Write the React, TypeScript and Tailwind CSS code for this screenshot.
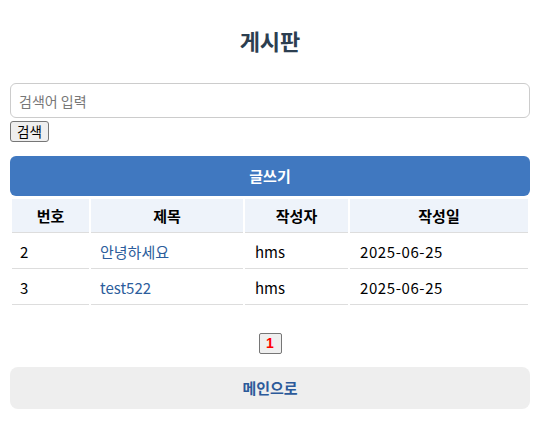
import React from "react";

const rows = [
  { id: 2, title: "안녕하세요", author: "hms", date: "2025-06-25" },
  { id: 3, title: "test522", author: "hms", date: "2025-06-25" },
];

export default function App() {
  const font = { fontFamily: '"Noto Sans CJK KR", "Noto Sans", sans-serif' };
  return (
    <div className="min-h-[436px] bg-white" style={font}>
      <div className="w-[520px] ml-[10px] pt-[25px]">
        <h2 className="text-center text-[22px] leading-[30px] font-bold text-[#2c3e50]">게시판</h2>
        <input
          placeholder="검색어 입력"
          className="mt-[28px] block w-full h-[35px] rounded-[6px] border border-[#cccccc] px-[8px] text-[14px] text-[#222] placeholder:text-[#777] outline-none"
        />
        <button className="mt-[3px] block h-[21px] px-[6px] border border-[#767676] rounded-[3px] bg-[#efefef] text-[13.5px] leading-[17px] text-black">
          검색
        </button>
        <button className="mt-[14px] block w-full h-[40px] rounded-[6px] bg-[#4078c0] text-white text-[15px] font-bold">
          글쓰기
        </button>
        <table className="mt-[1px] w-full border-separate border-spacing-[2px] text-[15px] text-black">
          <thead>
            <tr>
              <th className="w-[77px] bg-[#eef3fa] border-b border-[#dddddd] py-[8px] leading-[17px] font-bold">번호</th>
              <th className="w-[152px] bg-[#eef3fa] border-b border-[#dddddd] py-[8px] leading-[17px] font-bold">제목</th>
              <th className="w-[103px] bg-[#eef3fa] border-b border-[#dddddd] py-[8px] leading-[17px] font-bold">작성자</th>
              <th className="bg-[#eef3fa] border-b border-[#dddddd] py-[8px] leading-[17px] font-bold">작성일</th>
            </tr>
          </thead>
          <tbody>
            {rows.map((r) => (
              <tr key={r.id}>
                <td className="border-b border-[#dddddd] py-[8px] px-[8px] leading-[17px]">{r.id}</td>
                <td className="border-b border-[#dddddd] py-[8px] px-[9px] leading-[17px]">
                  <a className="text-[#2c5d9c] no-underline cursor-pointer">{r.title}</a>
                </td>
                <td className="border-b border-[#dddddd] py-[8px] px-[10px] leading-[17px]">{r.author}</td>
                <td className="border-b border-[#dddddd] py-[8px] px-[10px] leading-[17px] tracking-[0.6px]">{r.date}</td>
              </tr>
            ))}
          </tbody>
        </table>
        <div className="mt-[26px] flex justify-center">
          <button
            className="h-[21px] w-[23px] border border-[#767676] rounded-[2px] bg-[#efefef] text-[14px] leading-[19px] font-bold text-[#ff0000]"
            style={{ fontFamily: '"Liberation Sans", Arial, sans-serif' }}
          >
            1
          </button>
        </div>
        <button className="mt-[13px] block w-full h-[42px] rounded-[8px] bg-[#eeeeee] text-[#2c5a9a] text-[15px] font-bold">
          메인으로
        </button>
      </div>
    </div>
  );
}
